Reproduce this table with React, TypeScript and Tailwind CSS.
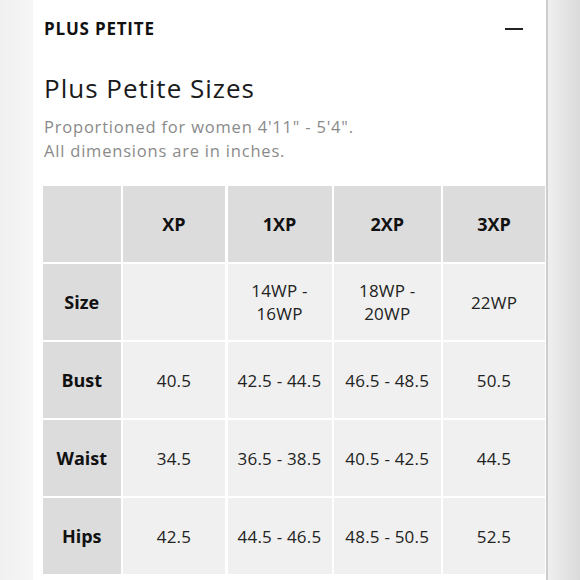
import React from 'react';

const sizes = ['XP', '1XP', '2XP', '3XP'];

const rows = [
  { label: 'Size', values: ['', '14WP -\n16WP', '18WP -\n20WP', '22WP'] },
  { label: 'Bust', values: ['40.5', '42.5 - 44.5', '46.5 - 48.5', '50.5'] },
  { label: 'Waist', values: ['34.5', '36.5 - 38.5', '40.5 - 42.5', '44.5'] },
  { label: 'Hips', values: ['42.5', '44.5 - 46.5', '48.5 - 50.5', '52.5'] },
];

const SizeTable = () => {
  return (
    <div className="grid grid-cols-[77.5px_102px_104px_106.5px_102px] auto-rows-[76px] gap-[2px_2.5px] text-[17px] text-[#222]">
      <div className="bg-[#dcdcdc]"></div>
      {sizes.map((s) => (
        <div key={s} className="bg-[#dcdcdc] flex items-center justify-center font-bold text-[#111] text-[18px]">
          {s}
        </div>
      ))}
      {rows.map((row) => (
        <React.Fragment key={row.label}>
          <div className="bg-[#dcdcdc] flex items-center justify-center font-bold text-[#111] text-[18px]">
            {row.label}
          </div>
          {row.values.map((v, i) => (
            <div key={i} className="bg-[#f0f0f0] flex items-center justify-center text-center leading-[23px] tracking-[0.2px] whitespace-pre-line">
              {v}
            </div>
          ))}
        </React.Fragment>
      ))}
    </div>
  );
};

export default function App() {
  return (
    <div className="w-[580px] h-[580px] flex overflow-hidden bg-white" style={{ fontFamily: '"Open Sans", "DejaVu Sans", sans-serif' }}>
      <div className="w-[33px] h-full bg-gradient-to-r from-[#f0f0f0] to-[#f6f6f6]"></div>

      <div className="w-[513px] h-full bg-white flex flex-col pl-[10px] pr-[1px]">
        <div className="h-[57px] flex items-center justify-between pl-[1px] pr-[22px]">
          <h2 className="text-[17px] font-bold text-[#111] tracking-[0.8px]">PLUS PETITE</h2>
          <div className="w-[18px] h-[2px] bg-[#222]"></div>
        </div>

        <h1 className="pl-[1px] mt-[15px] text-[26px] leading-[32px] tracking-[1px] text-[#1a1a1a]">Plus Petite Sizes</h1>

        <p className="pl-[1px] mt-[11px] text-[16.5px] leading-[24px] tracking-[0.8px] text-[#8a8a8a]">
          Proportioned for women 4'11" - 5'4".
          <br />
          All dimensions are in inches.
        </p>

        <div className="mt-[23px]">
          <SizeTable />
        </div>
      </div>

      <div className="flex-1 h-full border-l-2 border-[#cdcdcd] bg-gradient-to-r from-[#efefef] to-[#dadada]"></div>
    </div>
  );
}
